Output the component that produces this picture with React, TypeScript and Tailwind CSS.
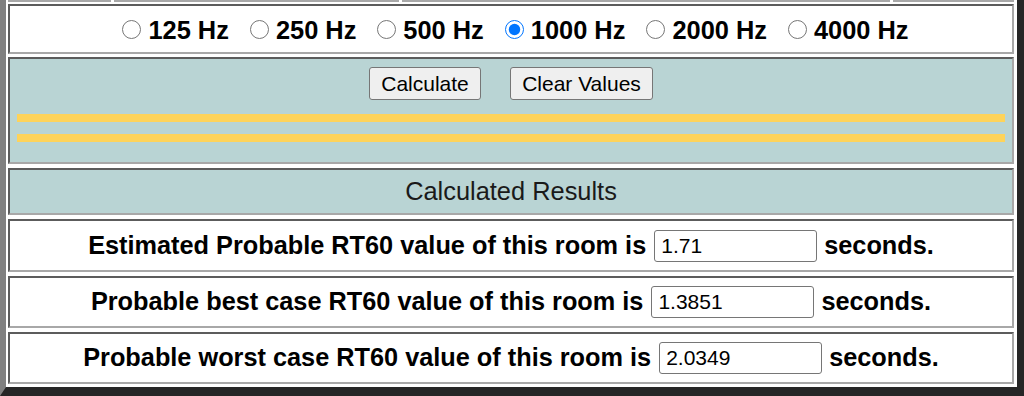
import type { ReactNode } from "react";

type Result = {
  label: string;
  value: string;
};

const freqs = ["125 Hz", "250 Hz", "500 Hz", "1000 Hz", "2000 Hz", "4000 Hz"];

const results: Result[] = [
  { label: "Estimated Probable RT60 value of this room is", value: "1.71" },
  { label: "Probable best case RT60 value of this room is", value: "1.3851" },
  { label: "Probable worst case RT60 value of this room is", value: "2.0349" },
];

function Cell({
  children,
  className = "",
}: {
  children: ReactNode;
  className?: string;
}) {
  return (
    <div
      className={
        "border-2 border-t-[#5c5c5c] border-l-[#5c5c5c] border-b-[#a8a8a8] border-r-[#a8a8a8] " +
        className
      }
    >
      {children}
    </div>
  );
}

export default function App() {
  return (
    <div className="h-[396px] w-[1024px] overflow-hidden bg-white font-['Liberation_Sans',Arial,sans-serif] text-black">
      <div className="flex h-full flex-col border-l-[6px] border-r-[7px] border-b-[9px] border-l-[#808080] border-r-[#262626] border-b-[#262626] bg-white pl-[2px] pr-[3px]">
        {/* bottom edge of the row above, scrolled out of view */}
        <div className="flex h-[2px] gap-[3px]">
          <div className="w-[103px] bg-[#a8a8a8]" />
          <div className="w-[285px] bg-[#a8a8a8]" />
          <div className="w-[488px] bg-[#a8a8a8]" />
          <div className="flex-1 bg-[#a8a8a8]" />
        </div>

        <Cell className="mt-[2px] flex h-[50px] items-center justify-center gap-[21px] pl-[9px] pt-[2px]">
          {freqs.map((f) => (
            <label key={f} className="flex items-center text-[25.4px] font-bold">
              <input
                type="radio"
                name="freq"
                defaultChecked={f === "1000 Hz"}
                className="m-0 mr-[7px] h-[19px] w-[19px] accent-[#0075ff]"
              />
              {f}
            </label>
          ))}
        </Cell>

        <Cell className="mt-[3px] h-[107px] bg-[#b9d4d4] px-[7px] pt-[8px]">
          <div className="flex justify-center gap-[29px]">
            <button className="h-[33px] w-[112px] rounded-[3px] border-[1.5px] border-[#767676] bg-[#efefef] text-[21px]">
              Calculate
            </button>
            <button className="h-[33px] w-[143px] rounded-[3px] border-[1.5px] border-[#767676] bg-[#efefef] text-[21px]">
              Clear Values
            </button>
          </div>
          <div className="mt-[14px] h-[8px] bg-[#fed35a]" />
          <div className="mt-[12px] h-[8px] bg-[#fed35a]" />
        </Cell>

        <Cell className="mt-[4px] flex h-[47px] items-center justify-center bg-[#b9d4d4] text-[25.4px] text-[#1a1a1a]">
          Calculated Results
        </Cell>

        {results.map((r, i) => (
          <Cell
            key={r.label}
            className={
              "mt-[4px] flex items-center justify-center text-[25.3px] font-bold " +
              (i === 0 ? "h-[53px]" : "h-[52px]")
            }
          >
            <span>{r.label}</span>
            <input
              type="text"
              readOnly
              value={r.value}
              className="ml-[8px] h-[32px] w-[163px] rounded-[3px] border-[1.5px] border-[#767676] bg-white px-[6px] text-[21px] font-normal outline-none"
            />
            <span className="ml-[7px]">seconds.</span>
          </Cell>
        ))}
      </div>
    </div>
  );
}
